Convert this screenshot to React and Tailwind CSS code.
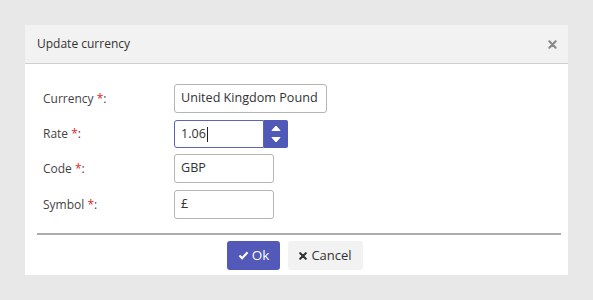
import { useState } from "react";

const fields = [
  { label: "Code", value: "GBP", width: "w-[100px]" },
  { label: "Symbol", value: "£", width: "w-[100px]" },
];

function Label({ text }) {
  return (
    <div className="w-[131px] text-[12px] text-[#444] whitespace-nowrap">
      {text} <span className="text-[#e02424]">*</span>:
    </div>
  );
}

function TextInput({ value, width }) {
  return (
    <div
      className={`${width} h-[29px] flex items-center px-[6px] border border-[#b5b5b5] rounded-[3px] bg-white text-[12.6px] text-[#333] whitespace-nowrap`}
    >
      {value}
    </div>
  );
}

export default function App() {
  const [rate] = useState("1.06");

  return (
    <div
      className="w-[593px] h-[300px] bg-[#e8e8e9] pt-[25px] pl-[25px]"
      style={{ fontFamily: "'Open Sans', sans-serif" }}
    >
      <div className="w-[543px] h-[250px] bg-white flex flex-col">
        <div className="h-[39px] bg-[#f2f2f2] border-b border-[#cfcfcf] flex items-center justify-between pl-[12px] pr-[11px]">
          <span className="text-[12px] text-[#333]">Update currency</span>
          <svg width="9" height="9" viewBox="0 0 10 10">
            <path d="M1.5 1.5 L8.5 8.5 M8.5 1.5 L1.5 8.5" stroke="#8a8a8a" strokeWidth="2.4" strokeLinecap="round" />
          </svg>
        </div>

        <div className="pl-[18px] pt-[20px] flex flex-col">
          <div className="flex items-center">
            <Label text="Currency" />
            <TextInput value="United Kingdom Pound" width="w-[153px]" />
          </div>
          <div className="flex items-center mt-[7px]">
            <Label text="Rate" />
            <div className="flex h-[28px]">
              <div className="w-[90px] flex items-center px-[6px] border border-[#5a62c4] rounded-l-[3px] text-[12.6px] text-[#333]">
                {rate}
                <span className="w-px h-[15px] bg-[#222] ml-px" />
              </div>
              <div className="w-[24px] bg-[#5058b8] rounded-r-[2px] flex flex-col items-center justify-center gap-[6px]">
                <svg width="10" height="6" viewBox="0 0 10 6">
                  <path d="M1 5.5 L5 1 L9 5.5 Z" fill="white" stroke="white" strokeLinejoin="round" />
                </svg>
                <svg width="10" height="6" viewBox="0 0 10 6">
                  <path d="M1 0.5 L5 5 L9 0.5 Z" fill="white" stroke="white" strokeLinejoin="round" />
                </svg>
              </div>
            </div>
          </div>
          {fields.map((f, i) => (
            <div key={f.label} className={`flex items-center ${i === 0 ? "mt-[6px]" : "mt-[7px]"}`}>
              <Label text={f.label} />
              <TextInput value={f.value} width={f.width} />
            </div>
          ))}
        </div>

        <div className="ml-[12px] mr-[7px] mt-[14px] h-[2px] bg-[#acacac]" />

        <div className="flex justify-center gap-[8px] pt-[6px] pr-[3px]">
          <button className="w-[53px] h-[29px] bg-[#5259b9] rounded-[3px] text-white text-[13.5px] flex items-center justify-center gap-[3px]">
            <svg width="11" height="9" viewBox="0 0 12 10">
              <path d="M1.5 5 L4.5 8 L10.5 1.5" stroke="white" strokeWidth="2.4" fill="none" />
            </svg>
            Ok
          </button>
          <button className="w-[75px] h-[29px] bg-[#f2f2f2] rounded-[3px] text-[#333] text-[13px] flex items-center justify-center gap-[4px]">
            <svg width="8" height="8" viewBox="0 0 10 10">
              <path d="M1.5 1.5 L8.5 8.5 M8.5 1.5 L1.5 8.5" stroke="#333" strokeWidth="2.6" strokeLinecap="round" />
            </svg>
            Cancel
          </button>
        </div>
      </div>
    </div>
  );
}
